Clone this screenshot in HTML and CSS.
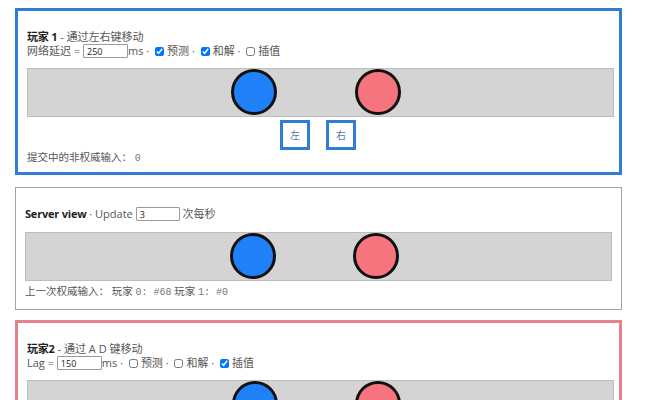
FILE: index.html
```html
<!DOCTYPE html>
<html lang="zh-CN">
<head>
	<meta charset="UTF-8">
	<title>客户端预测演示</title>
	<link rel="stylesheet" href="styles.css">
</head>
<body>
	<!-- 玩家 1 -->
	<div class="view view-p1">
		<p class="info">
			<b>玩家 1</b> - 通过左右键移动<br>
			网络延迟 = <input class="num" type="text" value="250">ms · <input type="checkbox" checked>预测 · <input type="checkbox" checked>和解 · <input type="checkbox">插值
		</p>
		<div class="track">
			<span class="ball ball-blue" style="left: 203px"></span>
			<span class="ball ball-red" style="left: 327px"></span>
		</div>
		<div class="keys">
			<button class="key">左</button>
			<button class="key">右</button>
		</div>
		<div class="status">提交中的非权威输入： <code>0</code></div>
	</div>

	<!-- 服务器 -->
	<div class="view view-server">
		<p class="info">
			<b>Server view</b> · Update <input class="num" type="text" value="3"> 次每秒
		</p>
		<div class="track">
			<span class="ball ball-blue" style="left: 204px"></span>
			<span class="ball ball-red" style="left: 327px"></span>
		</div>
		<div class="status">上一次权威输入： 玩家 <code>0: #68</code> 玩家 <code>1: #0</code></div>
	</div>

	<!-- 玩家 2 -->
	<div class="view view-p2">
		<p class="info">
			<b>玩家2</b> - 通过 A D 键移动<br>
			Lag = <input class="num" type="text" value="150">ms · <input type="checkbox">预测 · <input type="checkbox">和解 · <input type="checkbox" checked>插值
		</p>
		<div class="track">
			<span class="ball ball-blue" style="left: 204px"></span>
			<span class="ball ball-red" style="left: 327px"></span>
		</div>
	</div>
</body>
</html>
```

FILE: styles.css
```css
body{
	margin: 8px 15px;
	font-family: "Open Sans", "Noto Sans CJK SC", sans-serif;
	font-size: 11px;
	line-height: 14px;
	color: #444;
	background: #fff;
}
.view{
	width: 607px;
	box-sizing: border-box;
	margin-bottom: 11px;
	padding: 8px 9px;
}
.view-p1{
	border: 3px solid #2f7dd6;
	margin-bottom: 12px;
}
.view-server{
	border: 1px solid #a3a3a3;
	padding-bottom: 11px;
	margin-bottom: 10px;
}
.view-p2{
	border: 3px solid #e5808d;
}
.info{
	margin: 11px 0 10px;
	color: #555;
}
.info b{
	color: #222;
	letter-spacing: -0.2px;
}
.view-server .info{
	margin-bottom: 11px;
}
.num{
	width: 45px;
	height: 14px;
	box-sizing: border-box;
	margin: 0;
	padding: 0 3px;
	border: 1px solid #9a9a9a;
	border-radius: 1px;
	font-family: "Open Sans", sans-serif;
	font-size: 9px;
	color: #222;
	vertical-align: top;
}
.view-server .num{
	width: 44px;
}
.info input[type="checkbox"]{
	width: 9px;
	height: 9px;
	margin: 3px 3px 0 3px;
	vertical-align: top;
}
.track{
	position: relative;
	width: 585px;
	height: 47px;
	border: 1px solid #bdbdbd;
	background: #d4d4d4;
}
.ball{
	position: absolute;
	top: 0;
	width: 40px;
	height: 40px;
	border: 3px solid #111;
	border-radius: 50%;
}
.ball-blue{
	background: #2080f7;
}
.ball-red{
	background: #f6747e;
}
.keys{
	display: flex;
	justify-content: center;
	gap: 16px;
	margin-top: 3px;
	padding-right: 1px;
}
.key{
	width: 30px;
	height: 30px;
	margin: 0;
	padding: 0;
	border: 3px solid #2f7dd6;
	background: #fff;
	font-family: "Noto Sans CJK SC", sans-serif;
	font-size: 10px;
	line-height: 14px;
	color: #5a7aa8;
}
.status{
	height: 14px;
	color: #555;
	font-size: 10.5px;
}
.view-server .status{
	margin-top: 3px;
}
.status code{
	font-family: "Liberation Mono", monospace;
	font-size: 10px;
	color: #777;
}
```
